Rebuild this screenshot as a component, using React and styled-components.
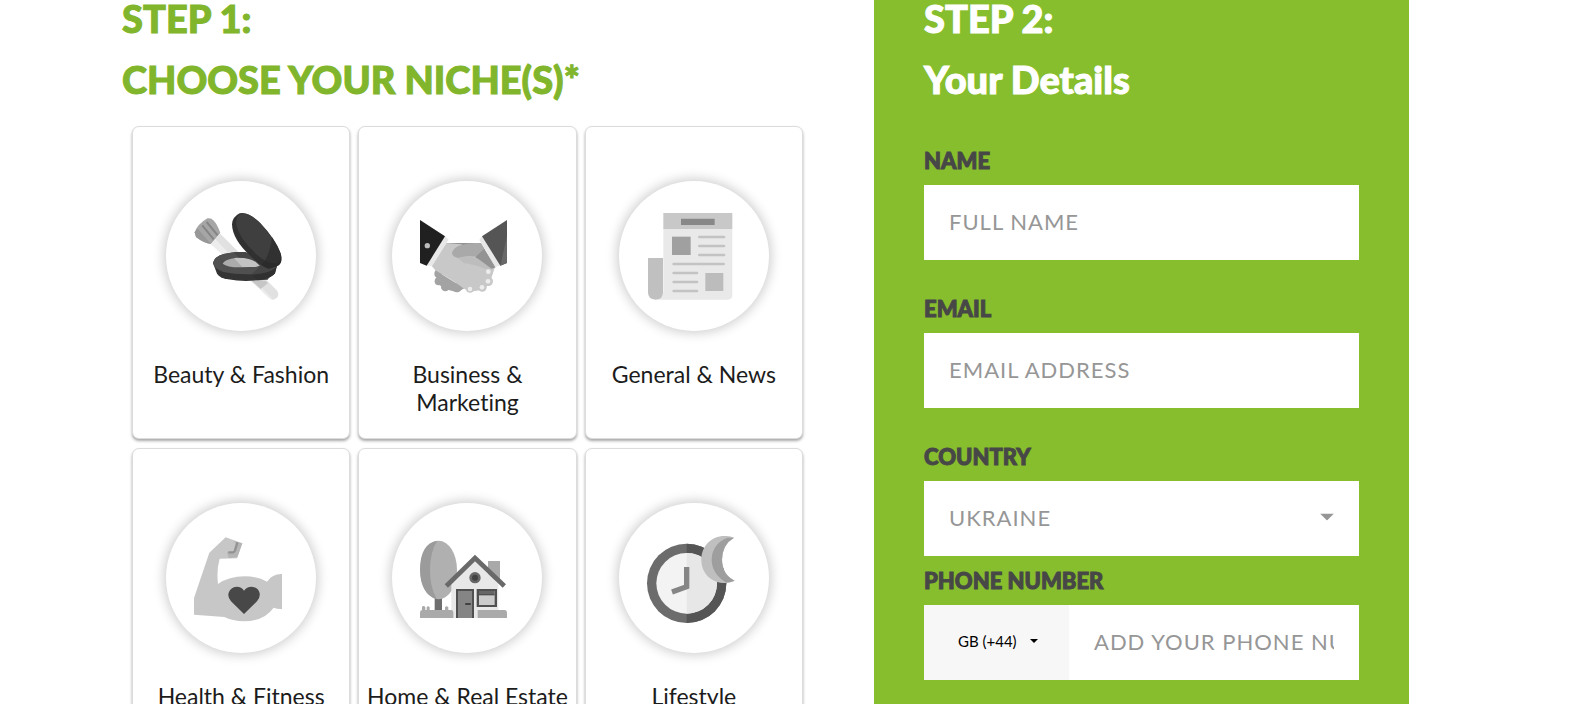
import React, { useState } from 'react';

import styled, { createGlobalStyle } from 'styled-components';

const GlobalStyle = createGlobalStyle`
    html {
        scrollbar-width: none;
    }
    body {
        margin: 0;
        background-color: white;
        font-family: Lato, "Open Sans", sans-serif;
    }
    *, *::before, *::after {
        box-sizing: border-box;
    }
`;

const Page = styled.main`
    display: grid;
    grid-template-columns: minmax(0, 1fr) 535px;
    padding: 0 162px 0 122px;
`;

const Heading = styled.h2`
    display: grid;
    gap: 25px;
    margin: 0;
    font-size: 38px;
    font-weight: 900;
    line-height: 36px;
    -webkit-text-stroke: 1px ${props => props.$color};
    color: ${props => props.$color};
`;

const NicheGrid = styled.div`
    display: grid;
    grid-template-columns: repeat(3, minmax(0, 1fr));
    gap: 9px 8px;
    padding: 29px 71px 40px 10px;
`;

const NicheCard = styled.button`
    display: flex;
    flex-direction: column;
    align-items: center;
    gap: 29px;
    padding: 54px 4px 22px;
    border: 1px solid #dcdcdc;
    border-radius: 7px;
    background-color: white;
    box-shadow: 0 2px 3px rgba(0, 0, 0, 0.35);
    font-family: inherit;
    font-variant-ligatures: none;
    color: #1c1c1c;
    cursor: pointer;
`;

const NicheCircle = styled.span`
    width: 150px;
    height: 150px;
    border-radius: 50%;
    background-color: white;
    box-shadow: 0 0 12px 2px rgba(0, 0, 0, 0.2);

    svg {
        display: block;
        width: 100%;
        height: 100%;
    }
`;

const NicheName = styled.span`
    min-height: 56px;
    font-size: 23px;
    line-height: 28px;
    text-align: center;
`;

const Details = styled.form`
    padding: 0 50px 40px;
    background-color: #87be2e;
`;

const Fields = styled.div`
    padding-top: 39px;
`;

const Field = styled.div`
    margin-bottom: ${props => (props.$tight ? '0' : '24px')};
`;

const FieldLabel = styled.label`
    display: block;
    font-size: 22px;
    font-weight: 900;
    line-height: 49px;
    -webkit-text-stroke: 1px #474747;
    color: #474747;
`;

const TextInput = styled.input`
    display: block;
    width: 100%;
    min-width: 0;
    height: 75px;
    padding: 0 25px 3px;
    border: none;
    border-radius: 0;
    outline: none;
    background-color: white;
    font-family: inherit;
    font-size: 22px;
    letter-spacing: 1px;
    color: #969696;

    &::placeholder {
        color: #969696;
        opacity: 1;
    }
`;

const SelectBox = styled.div`
    position: relative;
`;

const Select = styled.select`
    display: block;
    width: 100%;
    height: 75px;
    padding: 0 25px 3px;
    border: none;
    border-radius: 0;
    outline: none;
    appearance: none;
    background-color: white;
    font-family: inherit;
    font-size: 22px;
    letter-spacing: 1px;
    color: #969696;
`;

const CodeSelect = styled(Select)`
    padding: 0 34px 3px;
    background-color: #f7f7f7;
    font-size: 15px;
    letter-spacing: normal;
    color: black;
`;

const Caret = styled.svg`
    position: absolute;
    top: 36px;
    right: ${props => props.$right};
    width: ${props => props.$size};
    transform: translateY(-50%);
    fill: ${props => props.$color};
    pointer-events: none;
`;

const PhoneRow = styled.div`
    display: grid;
    grid-template-columns: 145px minmax(0, 1fr);
`;

function BeautyIcon() {
    return (
        <svg viewBox="18 18 450 450" aria-hidden="true">
            <path d="M104 172 Q112 148 142 130 Q154 128 160 136 Q172 148 181 174 L153 207 Q132 204 108 186 Z" fill="#a6a6a6" />
            <path d="M104 172 L112 160 L153 207 Q130 204 108 186 Z" fill="#979797" />
            <path d="M127 151 L161 193 M140 141 L173 181" stroke="#858585" strokeWidth="6" fill="none" />
            <path d="M153 207 L181 176 L350 346 Q359 356 352 367 Q341 379 330 371 Z" fill="#e1e1e1" />
            <path d="M153 207 L166 192 L338 373 Q332 373 328 369 Z" fill="#ededed" />
            <path d="M274 317 L316 317 L324 324 L302 342 Z" fill="#c6c6c6" />
            <path d="M159 264 Q163 245 191 237 Q220 230 254 231 L352 270 L345 295 Q336 308 306 314 Q254 322 204 313 Q178 308 171 296 Z" fill="#343434" />
            <path d="M159 264 Q163 245 191 237 Q220 230 254 231 L352 270 Q349 287 319 293 Q252 304 190 291 Q162 281 159 264 Z" fill="#505050" />
            <path d="M188 266 Q196 249 244 248 Q280 248 306 271 Q285 277 245 277 Q202 278 188 266 Z" fill="#ababab" />
            <path d="M222 249 Q260 246 285 260 L304 271 L286 276 L247 276 Z" fill="#c3c3c3" />
            <path d="M221 232 L254 231 L352 272 L323 314 L298 316 L275 298 L300 273 L287 260 Q264 247 236 248 Z" fill="#454545" />
            <path d="M216 148 Q217 126 239 115 Q264 109 300 143 Q346 191 362 235 Q370 264 354 272 L326 281 Q306 276 280 251 Q217 196 216 148 Z" fill="#303030" />
            <path d="M229 151 Q226 120 245 116 Q267 112 302 146 Q348 198 361 239 Q364 262 348 264 Q324 270 286 235 Q238 190 229 151 Z" fill="#3f3f3f" />
            <path d="M336 186 Q357 217 363 240 Q367 267 352 273 L326 281 L305 270 Q329 244 336 186 Z" fill="#292929" opacity="0.65" />
            <path d="M276 299 Q332 295 349 277 L345 295 Q336 308 306 314 L292 316 Z" fill="#303030" />
        </svg>
    );
}

function BusinessIcon() {
    return (
        <svg viewBox="18 18 450 450" aria-hidden="true">
            <path d="M180 204 L284 204 L328 275 L307 300 L190 250 Z" fill="#929292" />
            <g fill="#a3a3a3">
                <circle cx="157" cy="296" r="12" />
                <circle cx="158" cy="319" r="12" />
                <circle cx="178" cy="336" r="13" />
                <circle cx="213" cy="338" r="14" />
                <path d="M148 286 L235 340 L214 352 L176 342 L154 325 Z" />
            </g>
            <path d="M180 204 L226 208 L280 245 L326 279 L310 327 L291 344 L252 350 L236 342 L197 315 L148 286 L137 272 Z" fill="#c8c8c8" />
            <g fill="#c8c8c8">
                <circle cx="308" cy="290" r="13" />
                <circle cx="307" cy="319" r="14" />
                <circle cx="289" cy="337" r="13" />
                <circle cx="252" cy="340" r="13" />
            </g>
            <path d="M218 212 Q250 202 286 205 L298 225 L272 245 Q240 241 216 249 Q198 245 198 233 Q202 220 218 212 Z" fill="#a9a9a9" />
            <path d="M294 221 L330 276 L316 282 L268 247 Z" fill="#939393" />
            <path d="M216 249 Q242 239 276 251 L318 282 L298 281 Q259 267 234 265 Z" fill="#bdbdbd" />
            <g fill="#ededed">
                <circle cx="307" cy="290" r="7" />
                <circle cx="306" cy="319" r="7" />
                <circle cx="288" cy="337" r="7" />
                <circle cx="252" cy="342" r="7" />
            </g>
            <path d="M177 183 L188 194 L139 272 L122 272 Z M288 183 L280 195 L328 277 L343 271 Z" fill="#e8e8e8" />
            <path d="M102 135 L177 184 L122 272 L102 264 Z" fill="#202020" />
            <circle cx="124" cy="212" r="8" fill="#bcbcbc" />
            <path d="M363 135 L288 184 L343 272 L363 264 Z" fill="#555" />
            <path d="M363 183 L343 272 L363 264 Z" fill="#686868" />
        </svg>
    );
}

function NewsIcon() {
    return (
        <svg viewBox="21 18 450 450" aria-hidden="true">
            <path d="M154 162 H361 V360 Q361 374 347 374 H132 Q153 370 154 350 Z" fill="#e9e9e9" />
            <path d="M154 114 H361 V162 H154 Z" fill="#c8c8c8" />
            <path d="M207 131 H308 V150 H207 Z" fill="#888" />
            <path d="M108 249 H153 V352 Q153 374 131 374 Q108 374 108 352 Z" fill="#c0c0c0" />
            <path d="M180 185 H236 V240 H180 Z" fill="#a0a0a0" />
            <path d="M280 294 H334 V348 H280 Z" fill="#bcbcbc" />
            <path
                d="M262 186 H336 M262 213 H336 M262 240 H336 M185 267 H335 M185 294 H255 M185 321 H255 M185 348 H255"
                stroke="#c3c3c3"
                strokeWidth="8"
                strokeLinecap="round"
            />
        </svg>
    );
}

function HealthIcon() {
    return (
        <svg viewBox="18 18 450 450" aria-hidden="true">
            <path d="M197 121 L247 139 L231 184 L179 185 Q169 219 174 261 Q207 238 254 238 Q295 238 321 254 Q337 230 366 231 L366 336 Q353 337 341 332 Q312 372 253 373 Q216 372 193 360 L102 353 L102 303 L148 167 Z" fill="#c7c7c7" />
            <path d="M218 132 L247 139 L232 181 L206 183 L201 166 L222 166 L232 142 Z" fill="#b5b5b5" />
            <path d="M205 166 L219 166 Q223 165 225 160 L232 136" fill="none" stroke="#929292" strokeWidth="7" />
            <path d="M252 351 L213 313 Q202 300 206 287 Q212 270 230 269 Q245 269 252 281 Q260 269 275 269 Q295 271 299 289 Q301 302 291 313 Z" fill="#484848" />
        </svg>
    );
}

function HomeIcon() {
    return (
        <svg viewBox="18 18 450 450" aria-hidden="true">
            <path d="M146 295 H168 V342 H146 Z" fill="#6e6e6e" />
            <ellipse cx="158" cy="219" rx="55" ry="88" fill="#b0b0b0" />
            <path d="M154 131 Q102 139 102 219 Q103 291 152 307 Q131 267 132 216 Q133 163 154 131 Z" fill="#9b9b9b" />
            <path d="M306 192 H342 V250 H306 Z" fill="#a9a9a9" />
            <path d="M196 260 L267 193 L337 260 V363 H196 Z" fill="#e8e8e8" />
            <path d="M181 267 L267 183 L355 267" fill="none" stroke="#696969" strokeWidth="14" />
            <path d="M108 339 V331 Q108 327 113 327 Q118 327 118 332 V339 H122 V331 Q126 325 131 331 V339 H177 V331 Q182 325 187 331 V339 H196 Q202 340 202 346 V363 H102 V347 Q102 340 108 339 Z" fill="#aaa" />
            <circle cx="267" cy="242" r="17" fill="#666" />
            <circle cx="267" cy="242" r="9" fill="#424242" />
            <path d="M210 276 H264 V363 H210 Z" fill="#505050" />
            <path d="M216 282 H258 V363 H216 Z" fill="#858585" />
            <path d="M240 321 H252" stroke="#414141" strokeWidth="6" strokeLinecap="round" />
            <path d="M275 339 H357 Q363 340 363 347 V363 H275 Z" fill="#aaa" />
            <path d="M272 276 H333 V330 H272 Z" fill="#505050" />
            <path d="M279 282 H326 V324 H279 Z" fill="#cbcbcb" />
            <path d="M279 282 H326 V291 H279 Z" fill="#666" />
            <path d="M279 293 H326" stroke="#505050" strokeWidth="4" />
        </svg>
    );
}

function LifestyleIcon() {
    return (
        <svg viewBox="21 18 450 450" aria-hidden="true">
            <circle cx="224" cy="259" r="119" fill="#6c6c6c" />
            <path d="M224 140 A119 119 0 0 1 224 378 Z" fill="#555" />
            <circle cx="224" cy="259" r="91" fill="#f3f3f3" />
            <path d="M224 168 A91 91 0 0 1 224 350 Z" fill="#e7e7e7" />
            <path d="M224 210 V269 L180 285" fill="none" stroke="#858585" strokeWidth="16" />
            <path d="M366 122 Q331 142 330 188 Q331 233 368 251 Q350 260 333 258 C292 254 268 224 268 188 C268 147 299 116 339 117 Q355 116 366 122 Z" fill="#bfbfbf" />
            <path d="M366 122 Q331 142 330 188 Q331 233 368 251 Q355 257 341 256 Q299 228 299 188 Q300 141 346 122 Z" fill="#9e9e9e" />
        </svg>
    );
}

const niches = [
    { name: 'Beauty & Fashion', Icon: BeautyIcon },
    { name: 'Business & Marketing', Icon: BusinessIcon },
    { name: 'General & News', Icon: NewsIcon },
    { name: 'Health & Fitness', Icon: HealthIcon },
    { name: 'Home & Real Estate', Icon: HomeIcon },
    { name: 'Lifestyle', Icon: LifestyleIcon },
];

function App() {
    const [chosen, setChosen] = useState([]);

    const toggle = (name) => {
        setChosen(chosen.includes(name) ? chosen.filter(n => n !== name) : [...chosen, name]);
    };

    return (
        <Page>
            <GlobalStyle />
            <section>
                <Heading $color="#80b52c">
                    <span>STEP 1:</span>
                    <span>CHOOSE YOUR NICHE(S)*</span>
                </Heading>
                <NicheGrid>
                    {niches.map(({ name, Icon }) => (
                        <NicheCard key={name} type="button" aria-pressed={chosen.includes(name)} onClick={() => toggle(name)}>
                            <NicheCircle><Icon /></NicheCircle>
                            <NicheName>{name}</NicheName>
                        </NicheCard>
                    ))}
                </NicheGrid>
            </section>
            <Details>
                <Heading $color="white">
                    <span>STEP 2:</span>
                    <span>Your Details</span>
                </Heading>
                <Fields>
                    <Field>
                        <FieldLabel htmlFor="name">NAME</FieldLabel>
                        <TextInput id="name" name="name" placeholder="FULL NAME" />
                    </Field>
                    <Field>
                        <FieldLabel htmlFor="email">EMAIL</FieldLabel>
                        <TextInput id="email" name="email" type="email" placeholder="EMAIL ADDRESS" />
                    </Field>
                    <Field $tight>
                        <FieldLabel htmlFor="country">COUNTRY</FieldLabel>
                        <SelectBox>
                            <Select id="country" name="country">
                                <option>UKRAINE</option>
                            </Select>
                            <Caret viewBox="0 0 14 7" $size="14px" $right="25px" $color="#969696" aria-hidden="true">
                                <path d="M0 0 H14 L7 7 Z" />
                            </Caret>
                        </SelectBox>
                    </Field>
                    <Field>
                        <FieldLabel htmlFor="phone">PHONE NUMBER</FieldLabel>
                        <PhoneRow>
                            <SelectBox>
                                <CodeSelect name="code" aria-label="Country code">
                                    <option>GB (+44)</option>
                                </CodeSelect>
                                <Caret viewBox="0 0 14 7" $size="8px" $right="31px" $color="black" aria-hidden="true">
                                    <path d="M0 0 H14 L7 7 Z" />
                                </Caret>
                            </SelectBox>
                            <TextInput id="phone" name="phone" type="tel" placeholder="ADD YOUR PHONE NUMBER" />
                        </PhoneRow>
                    </Field>
                </Fields>
            </Details>
        </Page>
    );
}

export default App;
